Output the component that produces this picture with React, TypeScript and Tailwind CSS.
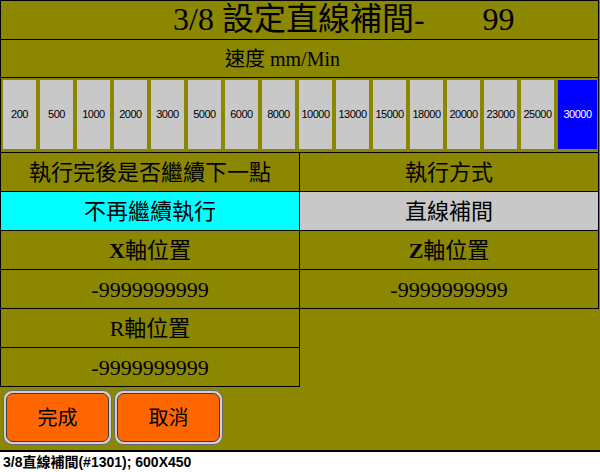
import React from 'react';

const speeds = [
  '200', '500', '1000', '2000', '3000', '5000', '6000', '8000',
  '10000', '13000', '15000', '18000', '20000', '23000', '25000',
];

const serif = "font-['Liberation_Serif','Noto_Sans_CJK_TC',serif]";

function Cell({ children, className = '' }: { children: React.ReactNode; className?: string }) {
  return (
    <div className={`flex h-[39px] items-center justify-center border-b border-black text-[22px] text-black ${className}`}>
      {children}
    </div>
  );
}

function OrangeButton({ label }: { label: string }) {
  return (
    <div className="h-[55px] w-[109px] rounded-[9px] border border-[#6a6a6a] bg-[#cfcfcf] p-[2px]">
      <div className="flex h-full w-full items-center justify-center rounded-[7px] border border-[#3a3a3a] bg-[#ff6600] text-[20px] text-black">
        {label}
      </div>
    </div>
  );
}

export default function App() {
  return (
    <div className={`h-[472px] w-[600px] bg-white ${serif}`}>
      <div className="h-[452px] w-[600px] border-b-2 border-black bg-[#8b8700]">
        {/* header + speed selector */}
        <div className="w-[599px] border-x border-t border-black">
          <div className="flex h-[39px] items-center border-b border-black pl-[172px] text-[32px] leading-none text-black">
            <span className="-mt-[3px]">3/8 設定直線補間-</span>
            <span className="-mt-[3px] ml-[58px]">99</span>
          </div>
          <div className="flex h-[38px] items-center border-b border-black pl-[224px] text-[20px] text-black">
            速度 mm/Min
          </div>
          <div className="flex h-[75px] border-b border-black pl-[2px] pr-[1px] pt-[2px] pb-[3px] font-['Liberation_Sans',sans-serif]">
            {speeds.map((s) => (
              <div
                key={s}
                className="mr-[4px] flex w-[33px] items-center justify-center bg-[#c8c8c8] text-[11px] tracking-[-0.5px] text-black"
              >
                {s}
              </div>
            ))}
            <div className="flex flex-1 items-center justify-center bg-[#0000ff] text-[11px] tracking-[-0.5px] text-white">
              30000
            </div>
          </div>
        </div>

        {/* settings grid */}
        <div className="grid w-[599px] grid-cols-[300px_299px]">
          <Cell className="border-x">執行完後是否繼續下一點</Cell>
          <Cell className="border-r">執行方式</Cell>
          <Cell className="border-x bg-[#00ffff]">不再繼續執行</Cell>
          <Cell className="border-r bg-[#c8c8c8]">直線補間</Cell>
          <Cell className="border-x"><b className="font-bold">X</b>軸位置</Cell>
          <Cell className="border-r"><b className="font-bold">Z</b>軸位置</Cell>
          <Cell className="border-x">-9999999999</Cell>
          <Cell className="border-r">-9999999999</Cell>
          <Cell className="border-x">R軸位置</Cell>
          <div />
          <Cell className="border-x">-9999999999</Cell>
          <div />
        </div>

        {/* action buttons */}
        <div className="flex gap-[2px] pl-[3px] pt-[3px]">
          <OrangeButton label="完成" />
          <OrangeButton label="取消" />
        </div>
      </div>
      <div className="flex h-[20px] items-center pl-[3px] font-['Liberation_Sans','Noto_Sans_CJK_TC',sans-serif] text-[14px] font-bold leading-none text-black">
        3/8直線補間(#1301); 600X450
      </div>
    </div>
  );
}
